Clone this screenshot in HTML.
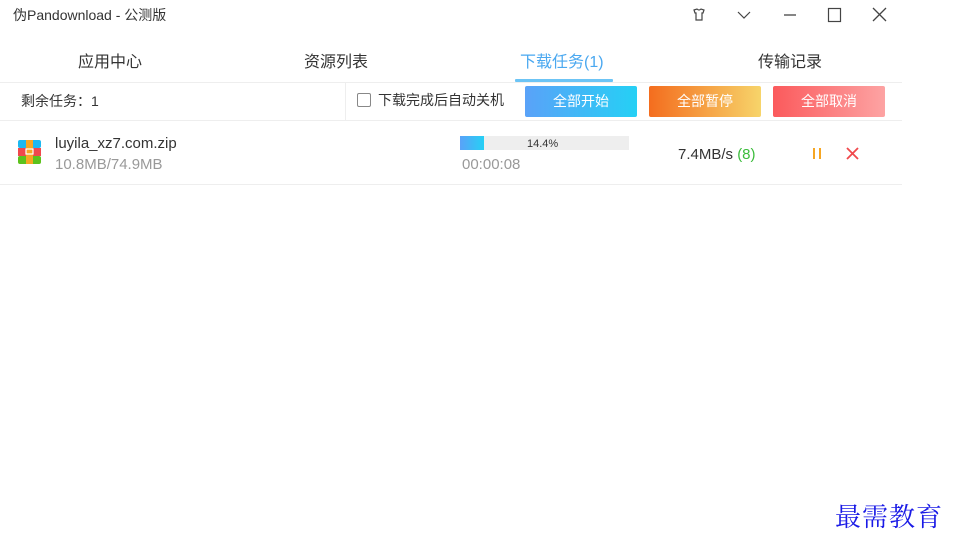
<!DOCTYPE html>
<html><head><meta charset="utf-8"><style>
*{margin:0;padding:0;box-sizing:border-box}
body{width:956px;height:546px;background:#fff;position:relative;overflow:hidden;font-family:"Liberation Sans","Noto Sans CJK SC",sans-serif;color:#333}
.a{position:absolute;white-space:nowrap}
.btn{position:absolute;top:86px;width:112px;height:31px;border-radius:2px;color:#fff;font-size:14px;text-align:center;line-height:31px}
</style></head><body>
<div class="a" style="left:13px;top:5px;font-size:14px;color:#333">伪Pandownload - 公测版</div>
<svg class="a" style="left:690px;top:6px" width="200" height="18" viewBox="0 0 200 18">
<path d="M4 4 L7 3 Q9 5 11 3 L14 4 L13 7 L12 7 L12 14 L6 14 L6 7 L5 7 Z" fill="none" stroke="#444" stroke-width="1.2"/>
<path d="M48 6 L54 12 L60 6" fill="none" stroke="#444" stroke-width="1.2"/>
<path d="M94 9 L106 9" stroke="#444" stroke-width="1.3"/>
<rect x="138.5" y="2.5" width="12" height="13" fill="none" stroke="#444" stroke-width="1.2"/>
<path d="M183 2 L196 15 M196 2 L183 15" stroke="#444" stroke-width="1.3"/>
</svg>
<div class="a" style="left:78px;top:48px;font-size:16px">应用中心</div>
<div class="a" style="left:304px;top:48px;font-size:16px">资源列表</div>
<div class="a" style="left:520px;top:48px;font-size:16px;color:#4aa8f0">下载任务(1)</div>
<div class="a" style="left:758px;top:48px;font-size:16px">传输记录</div>
<div class="a" style="left:0;top:82px;width:902px;height:1px;background:#eee"></div>
<div class="a" style="left:515px;top:79px;width:98px;height:3px;background:#6cc4f5;border-radius:1px"></div>
<div class="a" style="left:21px;top:91px;font-size:14px">剩余任务：1</div>
<div class="a" style="left:345px;top:83px;width:1px;height:37px;background:#eee"></div>
<div class="a" style="left:357px;top:93px;width:14px;height:14px;border:1px solid #888;border-radius:2px"></div>
<div class="a" style="left:378px;top:90px;font-size:14px">下载完成后自动关机</div>
<div class="btn" style="left:525px;background:linear-gradient(90deg,#5aa2f8,#25d0f5)">全部开始</div>
<div class="btn" style="left:649px;background:linear-gradient(90deg,#f46d1e,#f7d46a)">全部暂停</div>
<div class="btn" style="left:773px;background:linear-gradient(90deg,#fb5a5c,#fda3a3)">全部取消</div>
<div class="a" style="left:0;top:120px;width:902px;height:1px;background:#eee"></div>
<svg class="a" style="left:18px;top:140px" width="23" height="24" viewBox="0 0 23 24">
<rect x="0" y="0" width="23" height="8" rx="2" fill="#1cb8f0"/>
<rect x="0" y="8" width="23" height="8" fill="#f0484c"/>
<rect x="0" y="16" width="23" height="8" rx="2" fill="#5cc21c"/>
<rect x="8" y="0" width="7" height="24" fill="#f6a623"/>
<rect x="8" y="9" width="7" height="5" fill="none" stroke="#fff" stroke-width="1.2"/>
</svg>
<div class="a" style="left:55px;top:135px;font-size:15px;color:#333">luyila_xz7.com.zip</div>
<div class="a" style="left:55px;top:156px;font-size:15px;color:#999">10.8MB/74.9MB</div>
<div class="a" style="left:460px;top:136px;width:169px;height:14px;background:#eee"></div>
<div class="a" style="left:460px;top:136px;width:24px;height:14px;background:linear-gradient(90deg,#5aa2f8,#25d0f5)"></div>
<div class="a" style="left:527px;top:137px;font-size:11px;line-height:14px;color:#333">14.4%</div>
<div class="a" style="left:462px;top:156px;font-size:15px;color:#999">00:00:08</div>
<div class="a" style="left:678px;top:146px;font-size:15px">7.4MB/s <span style="color:#3cbc3c">(8)</span></div>
<div class="a" style="left:813px;top:148px;width:2px;height:11px;background:#f6a623"></div>
<div class="a" style="left:819px;top:148px;width:2px;height:11px;background:#f6a623"></div>
<svg class="a" style="left:846px;top:147px" width="13" height="13"><path d="M1 1 L12 12 M12 1 L1 12" stroke="#f0484c" stroke-width="1.8"/></svg>
<div class="a" style="left:0;top:184px;width:902px;height:1px;background:#eee"></div>
<div class="a" style="left:835px;top:497px;font-size:26px;color:#1a1ae6;font-family:'Noto Serif CJK SC',serif;letter-spacing:1px">最需教育</div>
</body></html>
